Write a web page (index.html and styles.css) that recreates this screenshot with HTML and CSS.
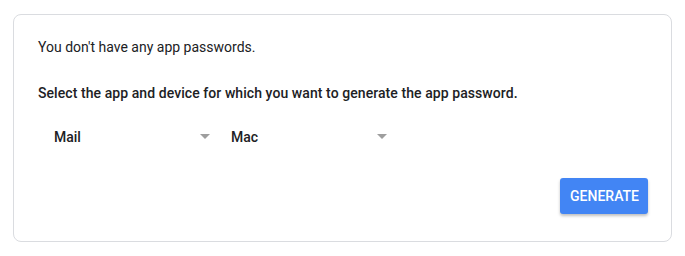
FILE: index.html
```html
<!DOCTYPE html>
<html>
<head>
<meta charset="utf-8">
<link rel="stylesheet" href="styles.css">
</head>
<body>
<div class="page">
  <div class="card">
    <p class="empty">You don't have any app passwords.</p>
    <p class="prompt">Select the app and device for which you want to generate the app password.</p>
    <div class="selects">
      <div class="select">
        <span class="value">Mail</span>
        <span class="arrow"></span>
      </div>
      <div class="select">
        <span class="value">Mac</span>
        <span class="arrow"></span>
      </div>
    </div>
    <div class="actions">
      <button class="generate">Generate</button>
    </div>
  </div>
</div>
</body>
</html>
```

FILE: styles.css
```css
html, body {
  margin: 0;
  padding: 0;
  background: #ffffff;
}
.page {
  padding: 14px 13px;
  font-family: Roboto, "Liberation Sans", sans-serif;
  font-size: 14px;
  color: #202124;
}
.card {
  box-sizing: border-box;
  height: 228px;
  border: 1px solid #dadce0;
  border-radius: 8px;
  padding: 22px 23px 0 24px;
}
.empty {
  margin: 0;
  line-height: 20px;
}
.prompt {
  margin: 26px 0 0;
  line-height: 20px;
  font-weight: 500;
  letter-spacing: 0.07px;
}
.selects {
  display: flex;
  margin-top: 24px;
}
.select {
  box-sizing: border-box;
  width: 177px;
  display: flex;
  align-items: center;
  justify-content: space-between;
  padding: 0 5px 0 16px;
  height: 20px;
  font-weight: 500;
}
.arrow {
  width: 0;
  height: 0;
  border-left: 5px solid transparent;
  border-right: 5px solid transparent;
  border-top: 5px solid #9e9e9e;
  margin-top: -2px;
}
.actions {
  display: flex;
  justify-content: flex-end;
  margin-top: 31px;
}
.generate {
  height: 36px;
  padding: 0 9px 0 10px;
  border: none;
  border-radius: 3px;
  background: #4285f4;
  color: #ffffff;
  font-family: Roboto, "Liberation Sans", sans-serif;
  font-size: 14px;
  font-weight: 500;
  text-transform: uppercase;
  box-shadow: 0 2px 3px rgba(0,0,0,0.25);
}
```
